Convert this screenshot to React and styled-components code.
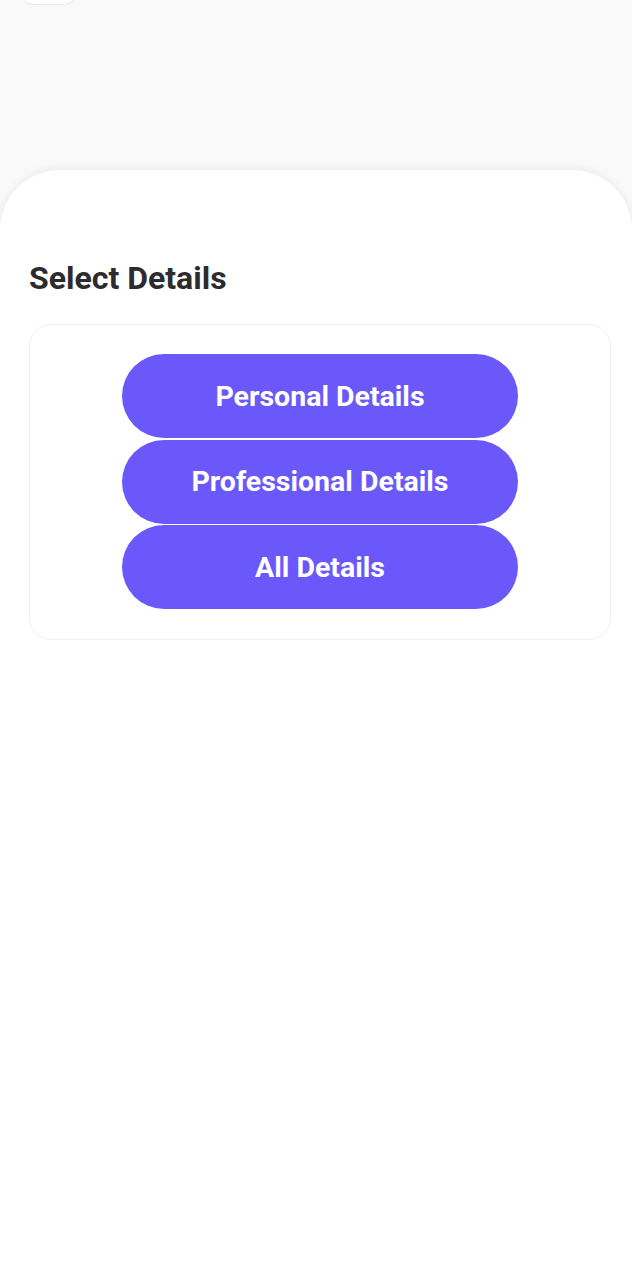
import React from "react";
import styled, { createGlobalStyle } from "styled-components";

const Global = createGlobalStyle`
  html, body { margin: 0; padding: 0; background: #f9f9f9; }
  body { font-family: Roboto, "Noto Sans", sans-serif; }
  * { box-sizing: border-box; }
`;

const Page = styled.div`
  width: 632px;
  height: 1280px;
  overflow: hidden;
  display: flex;
  flex-direction: column;
  background: #f9f9f9;
`;

const Header = styled.div`
  height: 170px;
  flex: none;
  padding-left: 20px;
`;

const BackButton = styled.div`
  width: 58px;
  height: 44px;
  margin-top: -39px;
  background: #fff;
  border: 1px solid #e6e6e6;
  border-radius: 14px;
`;

const Sheet = styled.div`
  flex: 1;
  background: #fff;
  border-radius: 60px 60px 0 0;
  box-shadow: 0 -2px 8px rgba(0, 0, 0, 0.06);
  padding: 88px 21px 0 29px;
  display: flex;
  flex-direction: column;
`;

const Title = styled.h2`
  margin: 0;
  font-size: 32px;
  line-height: 40px;
  font-weight: 700;
  color: #2c2c2e;
`;

const Card = styled.div`
  margin-top: 26px;
  border: 1px solid #efefef;
  border-radius: 22px;
  padding: 29px 0 30px;
  display: flex;
  flex-direction: column;
  align-items: center;
  gap: 1.5px;
`;

const Option = styled.button`
  width: 396px;
  height: 84px;
  border: none;
  border-radius: 42px;
  background: #6b58fa;
  color: #fff;
  font-family: Roboto, "Noto Sans", sans-serif;
  font-size: 28.5px;
  font-weight: 700;
  cursor: pointer;
`;

export default function App() {
  return (
    <Page>
      <Global />
      <Header>
        <BackButton />
      </Header>
      <Sheet>
        <Title>Select Details</Title>
        <Card>
          <Option>Personal Details</Option>
          <Option>Professional Details</Option>
          <Option>All Details</Option>
        </Card>
      </Sheet>
    </Page>
  );
}
